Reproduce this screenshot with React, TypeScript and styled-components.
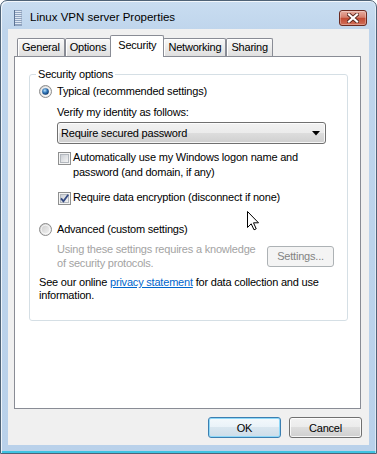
import React from "react";
import styled, { createGlobalStyle } from "styled-components";

const FONT = `"Liberation Sans", Arial, sans-serif`;

const GlobalStyle = createGlobalStyle`
  html, body { margin: 0; padding: 0; background: #ffffff; }
  body { font-family: ${FONT}; }
  *, *::before, *::after { box-sizing: border-box; }
`;

const Window = styled.div`
  position: relative;
  width: 377px;
  height: 454px;
  display: flex;
  flex-direction: column;
  background: linear-gradient(#c9ddf1, #bfd5ec 30px, #b9d1ea);
  border: 1px solid #4f6377;
  border-radius: 7px 7px 0 0;
  box-shadow: inset 1px 1px 0 rgba(255, 255, 255, 0.75),
    inset -1px 0 0 rgba(255, 255, 255, 0.5), inset 0 -2px 0 #3ec3e2;
  overflow: hidden;
  font-family: ${FONT};
  font-size: 11px;
  letter-spacing: -0.2px;
  color: #000;
`;

const TitleBar = styled.div`
  flex: none;
  height: 28px;
  display: flex;
  align-items: flex-start;
  padding: 8px 9px 0 13px;
`;

const TitleIcon = styled.span`
  display: flex;
  margin-top: 1px;
`;

const TitleText = styled.span`
  margin-left: 8px;
  font-size: 11.5px;
  letter-spacing: 0;
  line-height: 16px;
  color: #000;
`;

const CloseButton = styled.div`
  margin-left: auto;
  margin-top: 1px;
  width: 28px;
  height: 16px;
  border: 1px solid #6b2a20;
  border-radius: 3px;
  background: linear-gradient(#e8ada1, #d57f6d 45%, #c24a33 52%, #d0705b);
  box-shadow: inset 0 0 0 1px rgba(255, 255, 255, 0.3);
  display: flex;
  align-items: center;
  justify-content: center;
`;

const Client = styled.div`
  flex: 1;
  margin: 0 7px 8px 7px;
  background: #f0f0f0;
  display: flex;
  flex-direction: column;
  padding: 6px 8px 7px 6px;
`;

const TabRow = styled.div`
  flex: none;
  display: flex;
  align-items: flex-end;
  height: 22px;
  padding-left: 3px;
  margin-bottom: -1px;
  position: relative;
  z-index: 1;
`;

const Tab = styled.div<{ $active?: boolean }>`
  height: ${(p) => (p.$active ? 22 : 18)}px;
  margin: 0 ${(p) => (p.$active ? -1 : 0)}px ${(p) => (p.$active ? 0 : 1)}px;
  padding: ${(p) => (p.$active ? "2px 7px 0" : "1px 4px 0")};
  border: 1px solid #898c95;
  border-bottom: none;
  border-radius: 2px 2px 0 0;
  background: ${(p) =>
    p.$active ? "#ffffff" : "linear-gradient(#f8f8f8, #ececec 50%, #dfdfdf)"};
  box-shadow: ${(p) => (p.$active ? "none" : "inset 1px 1px 0 #ffffff")};
  position: relative;
  z-index: ${(p) => (p.$active ? 2 : 1)};
  line-height: 14px;
  white-space: nowrap;
`;

const Panel = styled.div`
  flex: 1;
  background: #ffffff;
  border: 1px solid #898c95;
  position: relative;
  display: flex;
  flex-direction: column;
  padding: 0 12px 0 14px;
`;

const GroupBox = styled.fieldset`
  margin: 11px 0 0 0;
  padding: 4px 13px 18px 9px;
  border: 1px solid #d5dfe5;
  border-radius: 3px;
  min-width: 0;
`;

const Legend = styled.legend`
  padding: 0 2px;
  margin-left: -3px;
  line-height: 13px;
  font-size: 11px;
`;

const OptionRow = styled.div<{ $gap?: number }>`
  display: flex;
  align-items: center;
  gap: 5px;
  height: 13px;
  line-height: 13px;
  margin-top: ${(p) => p.$gap ?? 0}px;
`;

const Indent = styled.div`
  margin-left: 18px;
  display: flex;
  flex-direction: column;
`;

const Caption = styled.div<{ $gap?: number }>`
  line-height: 13px;
  margin-top: ${(p) => p.$gap ?? 0}px;
`;

const Combo = styled.div`
  margin-top: 3px;
  width: 269px;
  height: 22px;
  border: 1px solid #707070;
  border-radius: 3px;
  background: linear-gradient(#f2f2f2, #ebebeb 50%, #dddddd 50%, #cfcfcf);
  box-shadow: inset 0 0 0 1px rgba(255, 255, 255, 0.8);
  display: flex;
  align-items: center;
  justify-content: space-between;
  padding: 0 5px 0 3px;
`;

const CheckRow = styled.div<{ $gap?: number }>`
  display: flex;
  align-items: flex-start;
  gap: 2px;
  margin-left: 1px;
  line-height: 15px;
  margin-top: ${(p) => p.$gap ?? 0}px;
`;

const BoxSlot = styled.span`
  flex: none;
  display: flex;
  margin-top: 2px;
`;

const DescRow = styled.div`
  margin-top: 6px;
  display: flex;
  align-items: center;
  justify-content: space-between;
`;

const DisabledText = styled.div`
  margin-left: 18px;
  line-height: 14px;
  color: #a3a3a3;
`;

const SmallButton = styled.div`
  width: 67px;
  height: 21px;
  border: 1px solid #adb2b5;
  border-radius: 3px;
  background: #f4f4f4;
  color: #838383;
  display: flex;
  align-items: center;
  justify-content: center;
`;

const Privacy = styled.div`
  margin-top: 6px;
  line-height: 13px;
`;

const Link = styled.span`
  color: #0066cc;
  text-decoration: underline;
`;

const ButtonRow = styled.div`
  flex: none;
  margin: 8px -1px 0 0;
  display: flex;
  justify-content: flex-end;
  gap: 8px;
`;

const DialogButton = styled.div<{ $default?: boolean }>`
  width: 73px;
  height: 21px;
  border: 1px solid ${(p) => (p.$default ? "#3c7fb1" : "#707070")};
  border-radius: 3px;
  background: ${(p) =>
    p.$default
      ? "linear-gradient(#f4f9fc, #e9f2f8 50%, #d9e6ef 50%, #cddde9)"
      : "linear-gradient(#f2f2f2, #ebebeb 50%, #dddddd 50%, #cfcfcf)"};
  box-shadow: inset 0 0 0 1px
    ${(p) => (p.$default ? "#8ed8f8" : "rgba(255, 255, 255, 0.8)")};
  display: flex;
  align-items: center;
  justify-content: center;
`;

const Cursor = styled.span`
  position: absolute;
  left: 245px;
  top: 209px;
  display: flex;
  pointer-events: none;
`;

function Radio({ checked, id }: { checked?: boolean; id: string }) {
  return (
    <svg width="13" height="13" viewBox="0 0 13 13">
      <defs>
        <linearGradient id={`${id}o`} x1="0" y1="0" x2="1" y2="1">
          <stop offset="0" stopColor="#c6c6c6" />
          <stop offset="1" stopColor="#fafafa" />
        </linearGradient>
        <radialGradient id={`${id}d`} cx="0.4" cy="0.35" r="0.65">
          <stop offset="0" stopColor="#b5e0fb" />
          <stop offset="0.55" stopColor="#2f75b8" />
          <stop offset="1" stopColor="#0d3a6e" />
        </radialGradient>
      </defs>
      <circle cx="6.5" cy="6.5" r="6" fill={`url(#${id}o)`} stroke="#8d8d8d" />
      <circle cx="6.5" cy="6.5" r="4.3" fill="none" stroke="#ffffff" strokeOpacity="0.7" />
      {checked && <circle cx="6.5" cy="6.5" r="3.3" fill={`url(#${id}d)`} />}
    </svg>
  );
}

function CheckBox({ checked, id }: { checked?: boolean; id: string }) {
  return (
    <svg width="13" height="13" viewBox="0 0 13 13">
      <defs>
        <linearGradient id={id} x1="0" y1="0" x2="1" y2="1">
          <stop offset="0" stopColor="#c9cdd3" />
          <stop offset="1" stopColor="#f7f7f7" />
        </linearGradient>
      </defs>
      <rect x="0.5" y="0.5" width="12" height="12" fill="#f4f4f4" stroke="#8e8f8f" />
      <rect x="2.5" y="2.5" width="8" height="8" fill={`url(#${id})`} stroke="#b3b8be" />
      {checked && (
        <path d="M3 6.4 L5.4 9.2 L10.2 2.8" fill="none" stroke="#344a82" strokeWidth="1.8" />
      )}
    </svg>
  );
}

export default function App() {
  return (
    <>
      <GlobalStyle />
      <Window>
        <TitleBar>
          <TitleIcon>
            <svg width="8" height="16" viewBox="0 0 8 16">
              <rect x="0" y="0" width="8" height="16" fill="#8fa3bf" />
              {[1, 3, 5, 7, 9, 11, 13].map((y) => (
                <rect key={y} x="0.5" y={y} width="7" height="1" fill="#dfe8f3" />
              ))}
              <rect x="0" y="0" width="1" height="16" fill="#5d7394" />
            </svg>
          </TitleIcon>
          <TitleText>Linux VPN server Properties</TitleText>
          <CloseButton>
            <svg width="12" height="10" viewBox="0 0 12 10">
              <path d="M2 1.5 L10 8.5 M10 1.5 L2 8.5" stroke="#5a2a22" strokeWidth="4" strokeLinecap="square" />
              <path d="M2 1.5 L10 8.5 M10 1.5 L2 8.5" stroke="#ffffff" strokeWidth="2.2" strokeLinecap="square" />
            </svg>
          </CloseButton>
        </TitleBar>
        <Client>
          <TabRow>
            <Tab>General</Tab>
            <Tab>Options</Tab>
            <Tab $active>Security</Tab>
            <Tab>Networking</Tab>
            <Tab>Sharing</Tab>
          </TabRow>
          <Panel>
            <GroupBox>
              <Legend>Security options</Legend>
              <OptionRow>
                <Radio checked id="rtyp" />
                <span>Typical (recommended settings)</span>
              </OptionRow>
              <Indent>
                <Caption $gap={8}>Verify my identity as follows:</Caption>
                <Combo>
                  <span>Require secured password</span>
                  <svg width="8" height="5" viewBox="0 0 8 5">
                    <path d="M0 0 H8 L4 4.5 Z" fill="#000" />
                  </svg>
                </Combo>
                <CheckRow $gap={6}>
                  <BoxSlot>
                    <CheckBox id="cb1" />
                  </BoxSlot>
                  <span>
                    Automatically use my Windows logon name and
                    <br />
                    password (and domain, if any)
                  </span>
                </CheckRow>
                <CheckRow $gap={10}>
                  <BoxSlot>
                    <CheckBox checked id="cb2" />
                  </BoxSlot>
                  <span>Require data encryption (disconnect if none)</span>
                </CheckRow>
              </Indent>
              <OptionRow $gap={18}>
                <Radio id="radv" />
                <span>Advanced (custom settings)</span>
              </OptionRow>
              <DescRow>
                <DisabledText>
                  Using these settings requires a knowledge
                  <br />
                  of security protocols.
                </DisabledText>
                <SmallButton>Settings...</SmallButton>
              </DescRow>
              <Privacy>
                See our online <Link>privacy statement</Link> for data collection and use
                <br />
                information.
              </Privacy>
            </GroupBox>
          </Panel>
          <ButtonRow>
            <DialogButton $default>OK</DialogButton>
            <DialogButton>Cancel</DialogButton>
          </ButtonRow>
        </Client>
        <Cursor>
          <svg width="13" height="21" viewBox="0 0 13 21">
            <path
              d="M1.5 1.5 L1.5 17.5 L5.2 13.8 L8 19.8 L10.2 18.8 L7.5 12.8 L12.5 12.8 Z"
              fill="#ffffff"
              stroke="#000000"
              strokeWidth="1"
              strokeLinejoin="miter"
            />
          </svg>
        </Cursor>
      </Window>
    </>
  );
}
